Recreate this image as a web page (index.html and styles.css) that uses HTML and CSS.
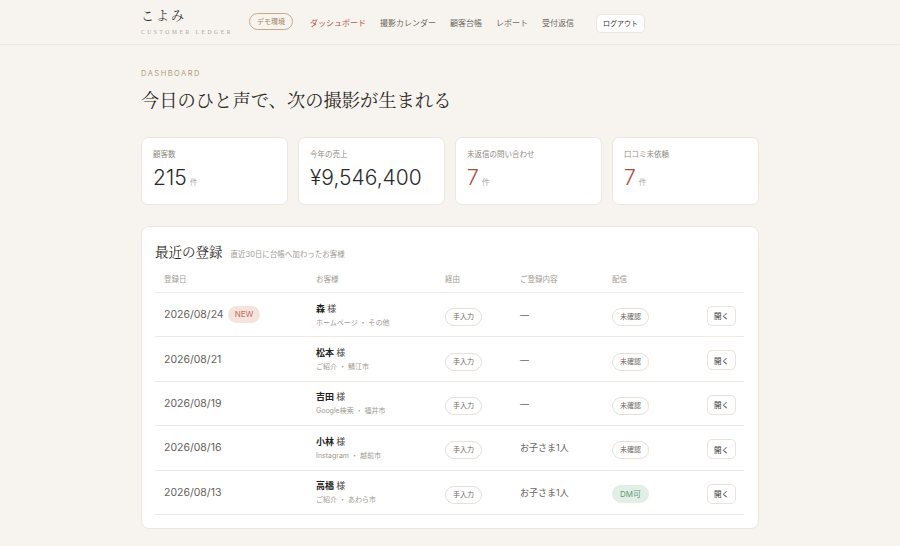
FILE: index.html
```html
<!DOCTYPE html>
<html lang="ja">
<head>
  <meta charset="UTF-8">
  <title>こよみ - ダッシュボード</title>
  <link rel="stylesheet" href="styles.css">
</head>
<body>
  <!-- ヘッダー -->
  <header class="site-header">
    <div class="header-inner">
      <div class="brand">
        <div class="brand-name">こよみ</div>
        <div class="brand-sub">CUSTOMER LEDGER</div>
      </div>
      <span class="demo-badge">デモ環境</span>
      <nav class="main-nav">
        <a class="nav-link active">ダッシュボード</a>
        <a class="nav-link">撮影カレンダー</a>
        <a class="nav-link">顧客台帳</a>
        <a class="nav-link">レポート</a>
        <a class="nav-link">受付返信</a>
      </nav>
      <button class="logout-btn">ログアウト</button>
    </div>
  </header>

  <main class="page">
    <div class="eyebrow">DASHBOARD</div>
    <h1 class="headline">今日のひと声で、次の撮影が生まれる</h1>

    <!-- 集計カード -->
    <div class="stats">
      <div class="stat-card">
        <div class="stat-label">顧客数</div>
        <div class="stat-value">215<span class="unit">件</span></div>
      </div>
      <div class="stat-card">
        <div class="stat-label">今年の売上</div>
        <div class="stat-value">¥9,546,400</div>
      </div>
      <div class="stat-card">
        <div class="stat-label">未返信の問い合わせ</div>
        <div class="stat-value alert">7<span class="unit">件</span></div>
      </div>
      <div class="stat-card">
        <div class="stat-label">口コミ未依頼</div>
        <div class="stat-value alert">7<span class="unit">件</span></div>
      </div>
    </div>

    <!-- 最近の登録 -->
    <section class="panel">
      <div class="panel-head">
        <h2 class="panel-title">最近の登録</h2>
        <span class="panel-sub">直近30日に台帳へ加わったお客様</span>
      </div>
      <div class="table">
        <div class="row head">
          <div>登録日</div>
          <div>お客様</div>
          <div>経由</div>
          <div>ご登録内容</div>
          <div>配信</div>
          <div></div>
        </div>
        <div class="row">
          <div class="date">2026/08/24 <span class="new-badge">NEW</span></div>
          <div><div class="name">森 <span>様</span></div><div class="meta">ホームページ ・ その他</div></div>
          <div><span class="chip">手入力</span></div>
          <div class="detail">—</div>
          <div><span class="chip">未確認</span></div>
          <div class="act"><button class="open-btn">開く</button></div>
        </div>
        <div class="row">
          <div class="date">2026/08/21</div>
          <div><div class="name">松本 <span>様</span></div><div class="meta">ご紹介 ・ 鯖江市</div></div>
          <div><span class="chip">手入力</span></div>
          <div class="detail">—</div>
          <div><span class="chip">未確認</span></div>
          <div class="act"><button class="open-btn">開く</button></div>
        </div>
        <div class="row">
          <div class="date">2026/08/19</div>
          <div><div class="name">吉田 <span>様</span></div><div class="meta">Google検索 ・ 福井市</div></div>
          <div><span class="chip">手入力</span></div>
          <div class="detail">—</div>
          <div><span class="chip">未確認</span></div>
          <div class="act"><button class="open-btn">開く</button></div>
        </div>
        <div class="row">
          <div class="date">2026/08/16</div>
          <div><div class="name">小林 <span>様</span></div><div class="meta">Instagram ・ 越前市</div></div>
          <div><span class="chip">手入力</span></div>
          <div class="detail">お子さま1人</div>
          <div><span class="chip">未確認</span></div>
          <div class="act"><button class="open-btn">開く</button></div>
        </div>
        <div class="row">
          <div class="date">2026/08/13</div>
          <div><div class="name">高橋 <span>様</span></div><div class="meta">ご紹介 ・ あわら市</div></div>
          <div><span class="chip">手入力</span></div>
          <div class="detail">お子さま1人</div>
          <div><span class="chip ok">DM可</span></div>
          <div class="act"><button class="open-btn">開く</button></div>
        </div>
      </div>
    </section>
  </main>
</body>
</html>
```

FILE: styles.css
```css
body {
  margin: 0;
  padding: 0;
  background-color: #f7f4ef;
  color: #333;
  font-family: Inter, "Noto Sans CJK JP", sans-serif;
}

/* ヘッダー */
.site-header {
  height: 45px;
  border-bottom: 1px solid #ebe6de;
  box-sizing: border-box;
}

.header-inner {
  width: 618px;
  margin: 0 auto;
  height: 100%;
  display: flex;
  align-items: center;
}

.brand {
  width: 108px;
}

.brand-name {
  font-family: "Noto Serif CJK JP", "Liberation Serif", "Noto Sans CJK JP", serif;
  font-size: 13px;
  letter-spacing: 2px;
  color: #333;
  line-height: 16px;
  margin-top: -2px;
}

.brand-sub {
  font-family: "Liberation Serif", serif;
  font-size: 5.5px;
  letter-spacing: 2.6px;
  color: #aaa49b;
  margin-top: 6px;
  white-space: nowrap;
}

.demo-badge {
  font-size: 7px;
  color: #a2825f;
  border: 1px solid #c6a886;
  border-radius: 9px;
  padding: 0 7px;
  height: 15px;
  line-height: 15px;
  margin-right: 17px;
  margin-top: -1px;
}

.main-nav {
  display: flex;
  gap: 14px;
  margin-top: 0;
}

.nav-link {
  font-size: 8px;
  color: #6e6860;
}

.nav-link.active {
  color: #b5574c;
}

.logout-btn {
  margin-left: 22px;
  margin-top: 2px;
  font-family: "Noto Sans CJK JP", sans-serif;
  font-size: 7px;
  color: #333;
  background-color: #fff;
  border: 1px solid #ece7e0;
  border-radius: 5px;
  height: 19px;
  padding: 0 6px;
}

/* メイン */
.page {
  width: 618px;
  margin: 0 auto;
  padding-top: 24px;
}

.eyebrow {
  font-size: 7.5px;
  letter-spacing: 1.5px;
  color: #b39a7d;
  line-height: 10px;
}

.headline {
  font-family: "Noto Serif CJK JP", "Liberation Serif", "Noto Sans CJK JP", serif;
  font-weight: normal;
  font-size: 18.3px;
  line-height: 25px;
  color: #2c2a27;
  margin: 8px 0 25px;
}

/* 集計カード */
.stats {
  display: grid;
  grid-template-columns: repeat(4, 1fr);
  gap: 10px;
}

.stat-card {
  background-color: #fff;
  border: 1px solid #ece7df;
  border-radius: 7px;
  height: 68px;
  box-sizing: border-box;
  padding: 12px 11px 0;
}

.stat-label {
  font-size: 7.5px;
  color: #8f8981;
  line-height: 10px;
}

.stat-value {
  font-weight: 300;
  font-size: 21px;
  line-height: 26px;
  margin-top: 5px;
  color: #2b2b2b;
}

.stat-value.alert {
  color: #b04a3d;
}

.unit {
  font-size: 8px;
  color: #8f8981;
  margin-left: 3px;
}

/* パネル */
.panel {
  margin-top: 21px;
  background-color: #fff;
  border: 1px solid #ece7df;
  border-radius: 8px;
  padding: 15px 14px 13px 13px;
}

.panel-head {
  display: flex;
  align-items: baseline;
  gap: 8px;
}

.panel-title {
  font-family: "Noto Serif CJK JP", "Liberation Serif", "Noto Sans CJK JP", serif;
  font-weight: normal;
  font-size: 13.5px;
  line-height: 18px;
  margin: 0;
  color: #2c2a27;
}

.panel-sub {
  font-size: 7.5px;
  color: #a09a92;
}

.table {
  margin-top: 5px;
}

.row {
  display: grid;
  grid-template-columns: 161px 129px 75px 92px 1fr 70px;
  align-items: center;
  height: 44.4px;
  border-bottom: 1px solid #eee9e3;
  box-sizing: border-box;
}

.row > div:first-child {
  padding-left: 9px;
}

.row.head {
  height: 28px;
  font-size: 7.5px;
  color: #a09a92;
}

.date {
  font-size: 10.5px;
  color: #66615b;
  display: flex;
  align-items: center;
}

.new-badge {
  font-size: 8px;
  color: #c0705f;
  background-color: #f5e3de;
  border-radius: 9px;
  padding: 0 7px;
  height: 17px;
  line-height: 17px;
  margin-left: 4px;
}

.name {
  font-size: 9px;
  font-weight: bold;
  color: #222;
  line-height: 13px;
}

.name span {
  font-weight: normal;
  color: #444;
}

.meta {
  font-size: 7px;
  color: #a09a92;
  line-height: 10px;
  margin-top: 3px;
}

.chip {
  display: inline-block;
  font-size: 7px;
  color: #6e6860;
  border: 1px solid #e6e1d9;
  border-radius: 9px;
  padding: 0 7px;
  height: 16px;
  line-height: 16px;
}

.chip.ok {
  background-color: #e2efe6;
  border-color: #e2efe6;
  color: #5f9a78;
  font-size: 8px;
}

.detail {
  font-size: 9px;
  color: #6a655f;
}

.act {
  text-align: right;
  padding-right: 8px;
}

.open-btn {
  font-family: "Noto Sans CJK JP", sans-serif;
  font-size: 7.5px;
  color: #333;
  background-color: #fff;
  border: 1px solid #e8e3dc;
  border-radius: 5px;
  width: 29px;
  height: 20px;
  padding: 0;
}
```
